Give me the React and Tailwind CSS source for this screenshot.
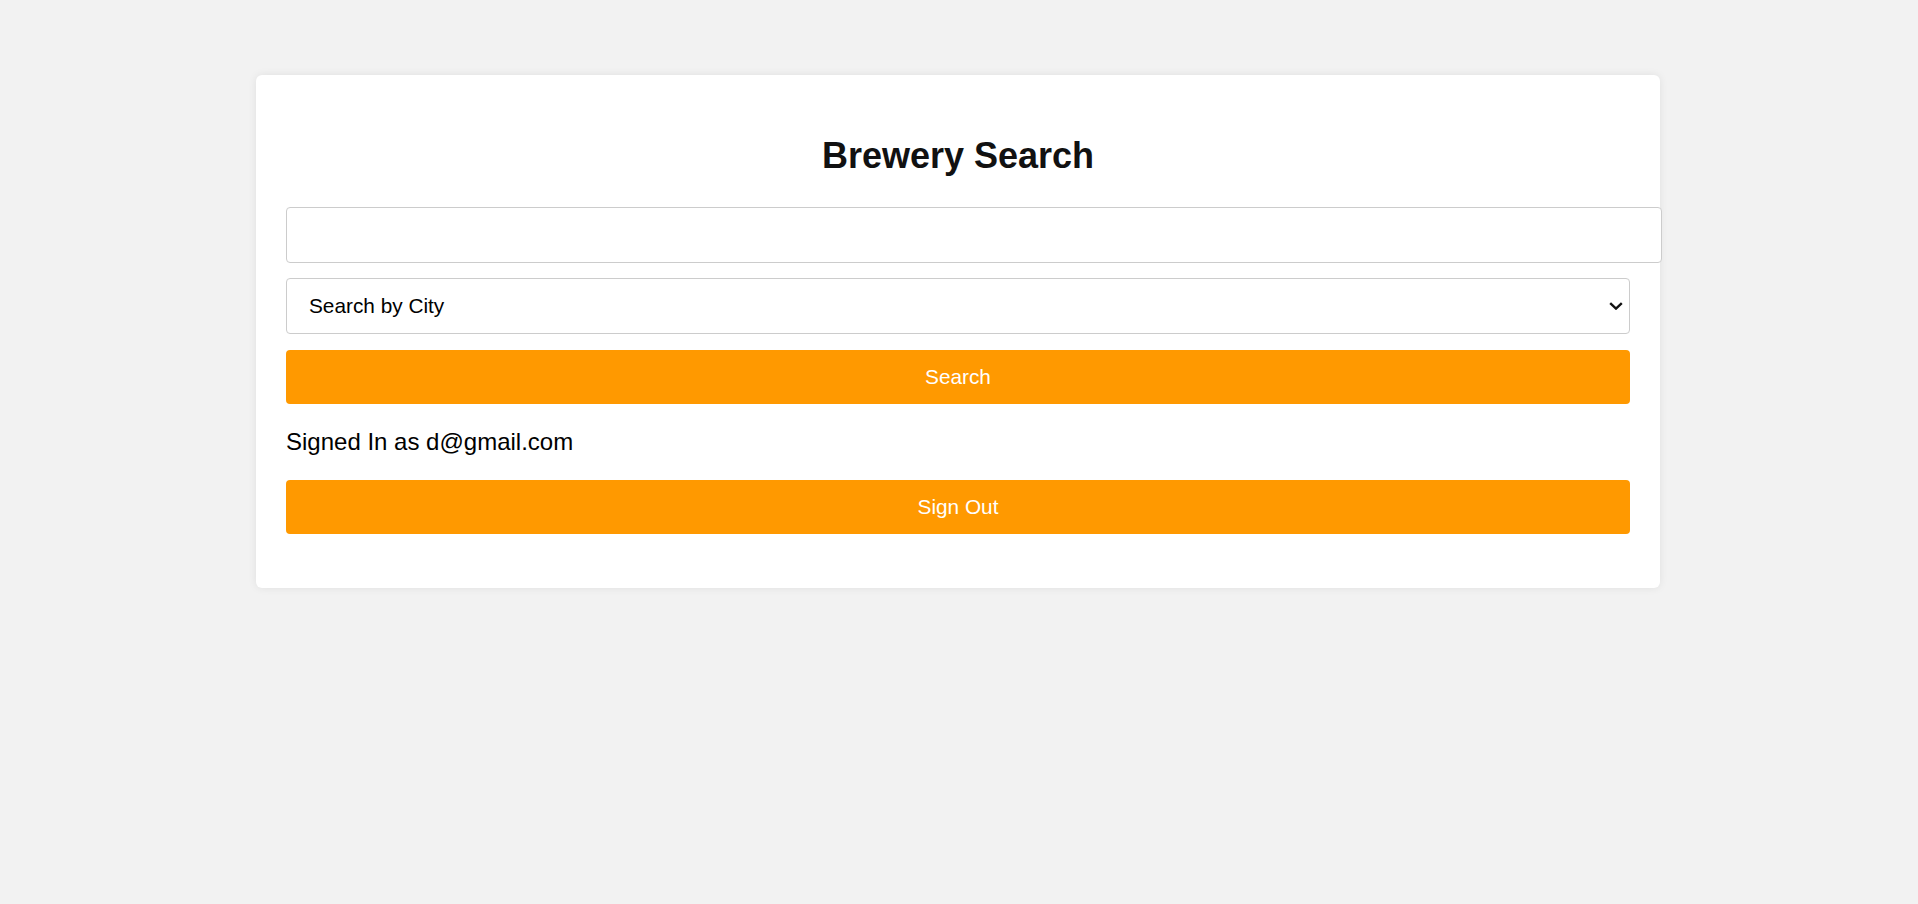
import React from "react";

const App = () => {
  return (
    <div className="min-h-screen w-full bg-[#f2f2f2] pt-[75px] pr-[2px] font-['Liberation_Sans',Arial,sans-serif]">
      {/* Card */}
      <div className="mx-auto w-[1404px] rounded-[6px] bg-white px-[30px] pt-[30px] pb-[30px] shadow-[0_0_8px_rgba(0,0,0,0.08)]">
        <h1 className="mt-[30px] mb-[31px] text-center text-[36px] leading-[41px] font-bold text-[#111]">
          Brewery Search
        </h1>

        {/* Search input */}
        <input
          type="text"
          className="box-content block h-[54px] w-full rounded-[4px] border border-[#ccc] bg-white px-[15px] text-[20.8px] outline-none"
        />

        {/* City select */}
        <div className="relative mt-[15px]">
          <select
            defaultValue="city"
            className="block h-[56px] w-full appearance-none rounded-[4px] border border-[#ccc] bg-white pl-[22px] pr-[40px] text-[20.8px] text-black"
          >
            <option value="city">Search by City</option>
            <option value="name">Search by Name</option>
            <option value="state">Search by State</option>
          </select>
          <svg
            className="pointer-events-none absolute right-[7px] top-[24px]"
            width="14"
            height="8"
            viewBox="0 0 14 8"
            fill="none"
          >
            <path d="M1.2 1.2 L7 6.6 L12.8 1.2" stroke="#111" strokeWidth="2.4" />
          </svg>
        </div>

        <button className="mt-[16px] block h-[54px] w-full rounded-[4px] bg-[#ff9900] text-[20.8px] text-white">
          Search
        </button>

        <p className="my-[24px] text-[24px] leading-[28px] text-black">
          Signed In as d@gmail.com
        </p>

        <button className="mb-[24px] block h-[54px] w-full rounded-[4px] bg-[#ff9900] text-[20.8px] text-white">
          Sign Out
        </button>
      </div>
    </div>
  );
};

export default App;
